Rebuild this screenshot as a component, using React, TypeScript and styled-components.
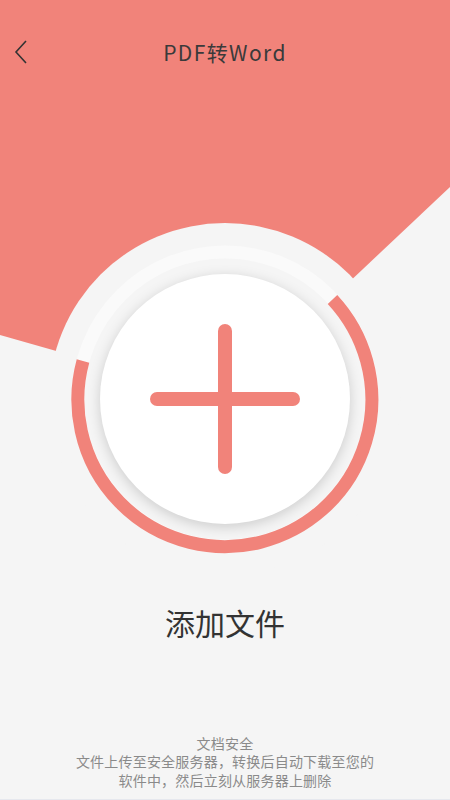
import styled, { createGlobalStyle } from 'styled-components'

const SALMON = '#f1837a'
const PAGE_BG = '#f5f5f5'

const GlobalStyle = createGlobalStyle`
  html, body {
    margin: 0;
    padding: 0;
    background: ${PAGE_BG};
  }
  body {
    font-family: 'Noto Sans CJK SC', 'Noto Sans', sans-serif;
  }
`

const Page = styled.div`
  position: relative;
  width: 450px;
  height: 800px;
  overflow: hidden;
  display: flex;
  flex-direction: column;
  align-items: center;
  background: ${PAGE_BG};
  border-bottom: 1px solid #e6e8ee;
  box-sizing: border-box;

  /* salmon backdrop, both edges run to the dial centre */
  &::before {
    content: '';
    position: absolute;
    inset: 0;
    background: ${SALMON};
    clip-path: polygon(0 0, 450px 0, 450px 187px, 225px 399px, 0 335px);
  }

  & > * {
    position: relative;
  }
`

const Header = styled.header`
  width: 100%;
  height: 40px;
  margin-top: 32px;
  display: grid;
  grid-template-columns: 64px 1fr 64px;
  align-items: center;
`

const BackButton = styled.button`
  border: 0;
  background: none;
  padding: 0 0 0 14px;
  height: 40px;
  display: flex;
  align-items: center;
  cursor: pointer;
`

const Title = styled.h1`
  margin: 0;
  text-align: center;
  font-size: 21px;
  font-weight: 400;
  letter-spacing: 1.4px;
  color: #3a3a3a;
  line-height: 40px;
`

const Dial = styled.div`
  margin-top: 151px;
  width: 352px;
  height: 352px;
  border-radius: 50%;
  background: ${PAGE_BG};
  display: grid;
  place-items: center;

  & > * {
    grid-area: 1 / 1;
  }
`

const AddButton = styled.button`
  width: 250px;
  height: 250px;
  border-radius: 50%;
  border: 0;
  background: #fff;
  box-shadow: 0 3px 13px rgba(0, 0, 0, 0.17);
  display: flex;
  align-items: center;
  justify-content: center;
  cursor: pointer;
  padding: 0;
`

const Label = styled.div`
  margin-top: 27px;
  font-size: 30px;
  line-height: 40px;
  color: #333;
`

const Footer = styled.footer`
  margin-top: auto;
  padding-bottom: 10px;
  text-align: center;
  font-size: 14px;
  line-height: 18.5px;
  letter-spacing: 0.2px;
  color: #8a8a8a;
`

const ProgressRing = () => (
  <svg width="352" height="352" viewBox="0 0 352 352">
    <circle cx="176" cy="176" r="147" fill="none" stroke="#fafafa" strokeWidth="13" />
    <path d="M 283.5 76.5 A 147 147 0 1 1 34 138" fill="none" stroke={SALMON} strokeWidth="13" />
  </svg>
)

const PlusIcon = () => (
  <svg width="164" height="164" viewBox="0 0 164 164">
    <g stroke={SALMON} strokeWidth="14" strokeLinecap="round">
      <line x1="82" y1="14" x2="82" y2="150" />
      <line x1="14" y1="82" x2="150" y2="82" />
    </g>
  </svg>
)

const App = () => {
  return (
    <>
      <GlobalStyle />
      <Page>
        <Header>
          <BackButton aria-label="back">
            <svg width="14" height="24" viewBox="0 0 14 24">
              <path d="M12 1 L2 12 L12 23" fill="none" stroke="#333" strokeWidth="1.6" />
            </svg>
          </BackButton>
          <Title>PDF转Word</Title>
          <span />
        </Header>
        <Dial>
          <ProgressRing />
          <AddButton aria-label="添加文件">
            <PlusIcon />
          </AddButton>
        </Dial>
        <Label>添加文件</Label>
        <Footer>
          文档安全
          <br />
          文件上传至安全服务器，转换后自动下载至您的
          <br />
          软件中，然后立刻从服务器上删除
        </Footer>
      </Page>
    </>
  )
}

export default App
